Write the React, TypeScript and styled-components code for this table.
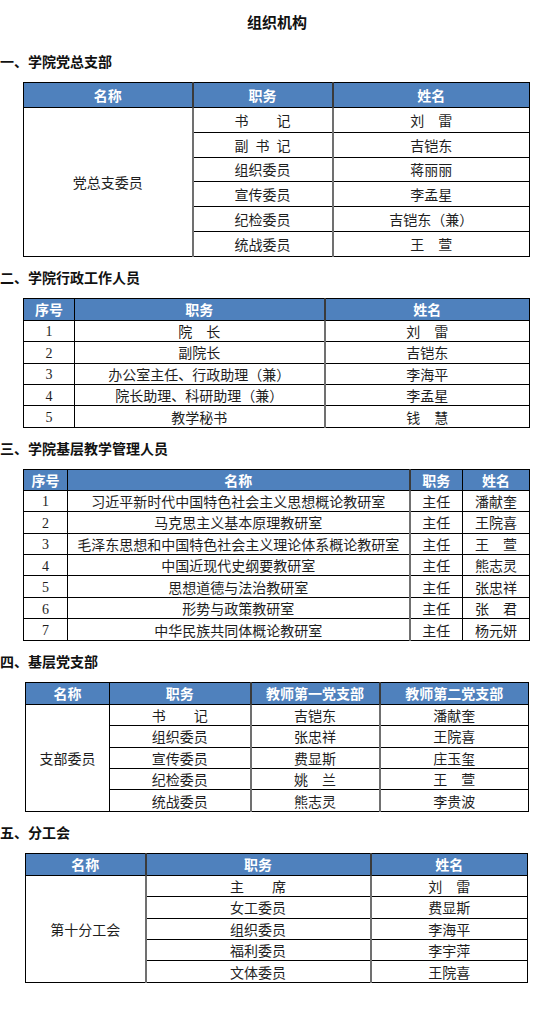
import React from 'react';
import styled, { createGlobalStyle } from 'styled-components';

const GlobalStyle = createGlobalStyle`
  body {
    margin: 0;
    background: #ffffff;
    color: #1e1e1e;
    font-family: "Noto Sans CJK SC", "Noto Sans", sans-serif;
  }
`;

const SP = '\u3000';

const App = () => {
  return (
    <Page>
      <GlobalStyle />
      <Title>组织机构</Title>

      <Section $first>
        <Heading>一、学院党总支部</Heading>
        <Table $left={23} $width={506}>
          <colgroup>
            <col style={{ width: 169 }} />
            <col style={{ width: 140 }} />
            <col style={{ width: 197 }} />
          </colgroup>
          <thead>
            <Row $h={25}>
              <Head>名称</Head>
              <Head $sep>职务</Head>
              <Head $sep>姓名</Head>
            </Row>
          </thead>
          <tbody>
            {[
              [`书${SP}${SP}记`, `刘${SP}雷`],
              ['副\u2002书\u2002记', '吉铠东'],
              ['组织委员', '蒋丽丽'],
              ['宣传委员', '李孟星'],
              ['纪检委员', '吉铠东（兼）'],
              ['统战委员', `王${SP}萱`],
            ].map((r, i) => (
              <Row key={i} $h={24.8}>
                {i === 0 && <Cell rowSpan={6}>党总支委员</Cell>}
                <Cell $sep>{r[0]}</Cell>
                <Cell $sep>{r[1]}</Cell>
              </Row>
            ))}
          </tbody>
        </Table>
      </Section>

      <Section>
        <Heading>二、学院行政工作人员</Heading>
        <Table $left={23} $width={506}>
          <colgroup>
            <col style={{ width: 51 }} />
            <col style={{ width: 250 }} />
            <col style={{ width: 205 }} />
          </colgroup>
          <thead>
            <Row $h={22}>
              <Head>序号</Head>
              <Head>职务</Head>
              <Head $sep>姓名</Head>
            </Row>
          </thead>
          <tbody>
            {[
              [`院${SP}长`, `刘${SP}雷`],
              ['副院长', '吉铠东'],
              ['办公室主任、行政助理（兼）', '李海平'],
              ['院长助理、科研助理（兼）', '李孟星'],
              ['教学秘书', `钱${SP}慧`],
            ].map((r, i) => (
              <Row key={i} $h={21.4}>
                <Num>{i + 1}</Num>
                <Cell>{r[0]}</Cell>
                <Cell $sep>{r[1]}</Cell>
              </Row>
            ))}
          </tbody>
        </Table>
      </Section>

      <Section>
        <Heading>三、学院基层教学管理人员</Heading>
        <Table $left={23} $width={506}>
          <colgroup>
            <col style={{ width: 44 }} />
            <col style={{ width: 342 }} />
            <col style={{ width: 53 }} />
            <col style={{ width: 67 }} />
          </colgroup>
          <thead>
            <Row $h={21}>
              <Head>序号</Head>
              <Head>名称</Head>
              <Head $sep>职务</Head>
              <Head>姓名</Head>
            </Row>
          </thead>
          <tbody>
            {[
              ['习近平新时代中国特色社会主义思想概论教研室', '潘献奎'],
              ['马克思主义基本原理教研室', '王院喜'],
              ['毛泽东思想和中国特色社会主义理论体系概论教研室', `王${SP}萱`],
              ['中国近现代史纲要教研室', '熊志灵'],
              ['思想道德与法治教研室', '张忠祥'],
              ['形势与政策教研室', `张${SP}君`],
              ['中华民族共同体概论教研室', '杨元妍'],
            ].map((r, i) => (
              <Row key={i} $h={21.45}>
                <Num>{i + 1}</Num>
                <Cell>{r[0]}</Cell>
                <Cell $sep>主任</Cell>
                <Cell>{r[1]}</Cell>
              </Row>
            ))}
          </tbody>
        </Table>
      </Section>

      <Section>
        <Heading>四、基层党支部</Heading>
        <Table $left={25} $width={503}>
          <colgroup>
            <col style={{ width: 84 }} />
            <col style={{ width: 141 }} />
            <col style={{ width: 129 }} />
            <col style={{ width: 149 }} />
          </colgroup>
          <thead>
            <Row $h={22}>
              <Head>名称</Head>
              <Head>职务</Head>
              <Head $sep>教师第一党支部</Head>
              <Head $sep>教师第二党支部</Head>
            </Row>
          </thead>
          <tbody>
            {[
              [`书${SP}${SP}记`, '吉铠东', '潘献奎'],
              ['组织委员', '张忠祥', '王院喜'],
              ['宣传委员', '费显斯', '庄玉玺'],
              ['纪检委员', `姚${SP}兰`, `王${SP}萱`],
              ['统战委员', '熊志灵', '李贵波'],
            ].map((r, i) => (
              <Row key={i} $h={21.4}>
                {i === 0 && <Cell rowSpan={5}>支部委员</Cell>}
                <Cell>{r[0]}</Cell>
                <Cell $sep>{r[1]}</Cell>
                <Cell $sep>{r[2]}</Cell>
              </Row>
            ))}
          </tbody>
        </Table>
      </Section>

      <Section>
        <Heading>五、分工会</Heading>
        <Table $left={25} $width={502}>
          <colgroup>
            <col style={{ width: 120 }} />
            <col style={{ width: 225 }} />
            <col style={{ width: 157 }} />
          </colgroup>
          <thead>
            <Row $h={22}>
              <Head>名称</Head>
              <Head $sep>职务</Head>
              <Head $sep>姓名</Head>
            </Row>
          </thead>
          <tbody>
            {[
              [`主${SP}${SP}席`, `刘${SP}雷`],
              ['女工委员', '费显斯'],
              ['组织委员', '李海平'],
              ['福利委员', '李宇萍'],
              ['文体委员', '王院喜'],
            ].map((r, i) => (
              <Row key={i} $h={21.4}>
                {i === 0 && <Cell rowSpan={5}>第十分工会</Cell>}
                <Cell $sep>{r[0]}</Cell>
                <Cell $sep>{r[1]}</Cell>
              </Row>
            ))}
          </tbody>
        </Table>
      </Section>
    </Page>
  );
};

const Page = styled.div`
  width: 554px;
  padding-bottom: 30px;
`;

const Title = styled.h1`
  margin: 0;
  padding-top: 12px;
  text-align: center;
  font-size: 15px;
  line-height: 20px;
  font-weight: 700;
  color: #111;
`;

const Section = styled.section<{ $first?: boolean }>`
  margin-top: ${(p) => (p.$first ? 19 : 10)}px;
`;

const Heading = styled.h2`
  margin: 0;
  font-size: 14px;
  line-height: 20px;
  font-weight: 700;
  color: #111;
`;

const Table = styled.table<{ $left: number; $width: number }>`
  margin: 11px 0 0 ${(p) => p.$left}px;
  width: ${(p) => p.$width}px;
  table-layout: fixed;
  border-collapse: collapse;
  border: 1px solid #000;
`;

const Row = styled.tr<{ $h: number }>`
  height: ${(p) => p.$h}px;
`;

const Head = styled.th<{ $sep?: boolean }>`
  padding: 0;
  background: #4f81bd;
  color: #fff;
  font-size: 14px;
  font-weight: 700;
  line-height: 1;
  text-align: center;
  white-space: nowrap;
  border: 1px solid #000;
  border-left: ${(p) => (p.$sep ? '2px solid #3a3a3a' : '1px solid #000')};
`;

const Cell = styled.td<{ $sep?: boolean }>`
  padding: 0;
  font-size: 14px;
  line-height: 1;
  text-align: center;
  white-space: nowrap;
  color: #1e1e1e;
  border: 1px solid #000;
  border-left: ${(p) => (p.$sep ? '2px solid #707070' : '1px solid #000')};
`;

const Num = styled(Cell)`
  padding-top: 3px;
  font-family: "Liberation Serif", serif;
  font-size: 14px;
`;

export default App;
